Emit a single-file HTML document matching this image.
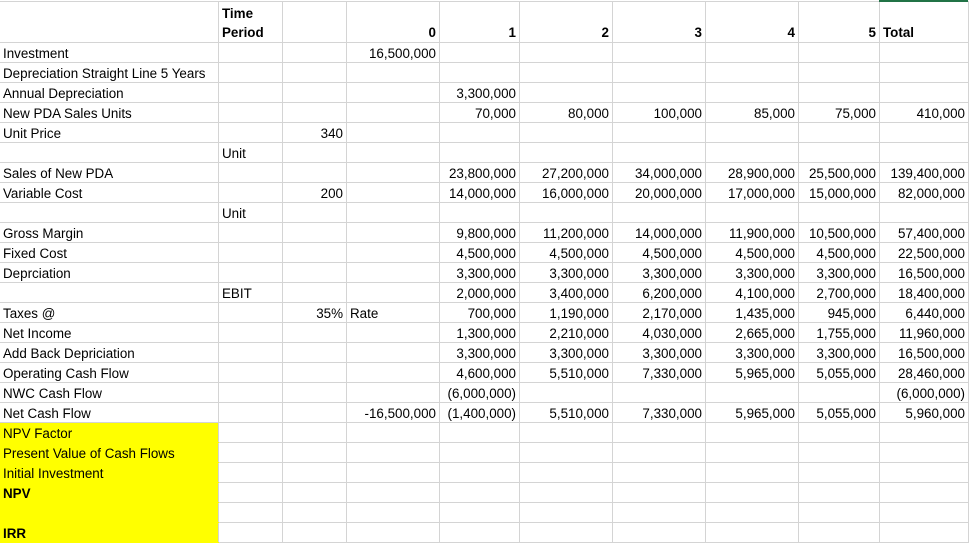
<!DOCTYPE html>
<html><head><meta charset="utf-8"><style>
body{margin:0;width:971px;height:543px;overflow:hidden;background:#fff;font-family:"Liberation Sans",sans-serif;font-size:13.4px;color:#000}
table{position:absolute;left:-1px;top:1px;border-collapse:collapse;table-layout:fixed}
td{border:1px solid #d4d4d4;padding:2px 3px 0 3px;white-space:nowrap;overflow:hidden;text-align:right;line-height:17px;height:17px}
td.l{text-align:left;overflow:visible}
tr.h td{height:38px;vertical-align:bottom;font-weight:bold;line-height:19px;padding-bottom:0}
.y{background:#ffff00;border-top-color:#ffff00;border-bottom-color:#ffff00;border-left-color:#ffff00}
.b{font-weight:bold}
.sel{position:absolute;left:879px;top:0;width:89px;height:2px;background:#217346}
</style></head><body>
<table>
<colgroup><col style="width:219px"><col style="width:64px"><col style="width:64px"><col style="width:93px"><col style="width:80px"><col style="width:93px"><col style="width:93px"><col style="width:93px"><col style="width:81px"><col style="width:89px"></colgroup>
<tr class="h"><td class="l"></td><td class="l">Time<br>Period</td><td></td><td>0</td><td>1</td><td>2</td><td>3</td><td>4</td><td>5</td><td class="l">Total</td></tr>
<tr><td class="l">Investment</td><td></td><td></td><td>16,500,000</td><td></td><td></td><td></td><td></td><td></td><td></td></tr>
<tr><td class="l">Depreciation Straight Line 5 Years</td><td></td><td></td><td></td><td></td><td></td><td></td><td></td><td></td><td></td></tr>
<tr><td class="l">Annual Depreciation</td><td></td><td></td><td></td><td>3,300,000</td><td></td><td></td><td></td><td></td><td></td></tr>
<tr><td class="l">New PDA Sales Units</td><td></td><td></td><td></td><td>70,000</td><td>80,000</td><td>100,000</td><td>85,000</td><td>75,000</td><td>410,000</td></tr>
<tr><td class="l">Unit Price</td><td></td><td>340</td><td></td><td></td><td></td><td></td><td></td><td></td><td></td></tr>
<tr><td class="l"></td><td class="l">Unit</td><td></td><td></td><td></td><td></td><td></td><td></td><td></td><td></td></tr>
<tr><td class="l">Sales of New PDA</td><td></td><td></td><td></td><td>23,800,000</td><td>27,200,000</td><td>34,000,000</td><td>28,900,000</td><td>25,500,000</td><td>139,400,000</td></tr>
<tr><td class="l">Variable Cost</td><td></td><td>200</td><td></td><td>14,000,000</td><td>16,000,000</td><td>20,000,000</td><td>17,000,000</td><td>15,000,000</td><td>82,000,000</td></tr>
<tr><td class="l"></td><td class="l">Unit</td><td></td><td></td><td></td><td></td><td></td><td></td><td></td><td></td></tr>
<tr><td class="l">Gross Margin</td><td></td><td></td><td></td><td>9,800,000</td><td>11,200,000</td><td>14,000,000</td><td>11,900,000</td><td>10,500,000</td><td>57,400,000</td></tr>
<tr><td class="l">Fixed Cost</td><td></td><td></td><td></td><td>4,500,000</td><td>4,500,000</td><td>4,500,000</td><td>4,500,000</td><td>4,500,000</td><td>22,500,000</td></tr>
<tr><td class="l">Deprciation</td><td></td><td></td><td></td><td>3,300,000</td><td>3,300,000</td><td>3,300,000</td><td>3,300,000</td><td>3,300,000</td><td>16,500,000</td></tr>
<tr><td class="l"></td><td class="l">EBIT</td><td></td><td></td><td>2,000,000</td><td>3,400,000</td><td>6,200,000</td><td>4,100,000</td><td>2,700,000</td><td>18,400,000</td></tr>
<tr><td class="l">Taxes @</td><td></td><td>35%</td><td class="l">Rate</td><td>700,000</td><td>1,190,000</td><td>2,170,000</td><td>1,435,000</td><td>945,000</td><td>6,440,000</td></tr>
<tr><td class="l">Net Income</td><td></td><td></td><td></td><td>1,300,000</td><td>2,210,000</td><td>4,030,000</td><td>2,665,000</td><td>1,755,000</td><td>11,960,000</td></tr>
<tr><td class="l">Add Back Depriciation</td><td></td><td></td><td></td><td>3,300,000</td><td>3,300,000</td><td>3,300,000</td><td>3,300,000</td><td>3,300,000</td><td>16,500,000</td></tr>
<tr><td class="l">Operating Cash Flow</td><td></td><td></td><td></td><td>4,600,000</td><td>5,510,000</td><td>7,330,000</td><td>5,965,000</td><td>5,055,000</td><td>28,460,000</td></tr>
<tr><td class="l">NWC Cash Flow</td><td></td><td></td><td></td><td>(6,000,000)</td><td></td><td></td><td></td><td></td><td>(6,000,000)</td></tr>
<tr><td class="l">Net Cash Flow</td><td></td><td></td><td>-16,500,000</td><td>(1,400,000)</td><td>5,510,000</td><td>7,330,000</td><td>5,965,000</td><td>5,055,000</td><td>5,960,000</td></tr>
<tr><td class="l y">NPV Factor</td><td></td><td></td><td></td><td></td><td></td><td></td><td></td><td></td><td></td></tr>
<tr><td class="l y">Present Value of Cash Flows</td><td></td><td></td><td></td><td></td><td></td><td></td><td></td><td></td><td></td></tr>
<tr><td class="l y">Initial Investment</td><td></td><td></td><td></td><td></td><td></td><td></td><td></td><td></td><td></td></tr>
<tr><td class="l y b">NPV</td><td></td><td></td><td></td><td></td><td></td><td></td><td></td><td></td><td></td></tr>
<tr><td class="l y"></td><td></td><td></td><td></td><td></td><td></td><td></td><td></td><td></td><td></td></tr>
<tr><td class="l y b">IRR</td><td></td><td></td><td></td><td></td><td></td><td></td><td></td><td></td><td></td></tr>
</table>
<div class="sel"></div>
</body></html>
